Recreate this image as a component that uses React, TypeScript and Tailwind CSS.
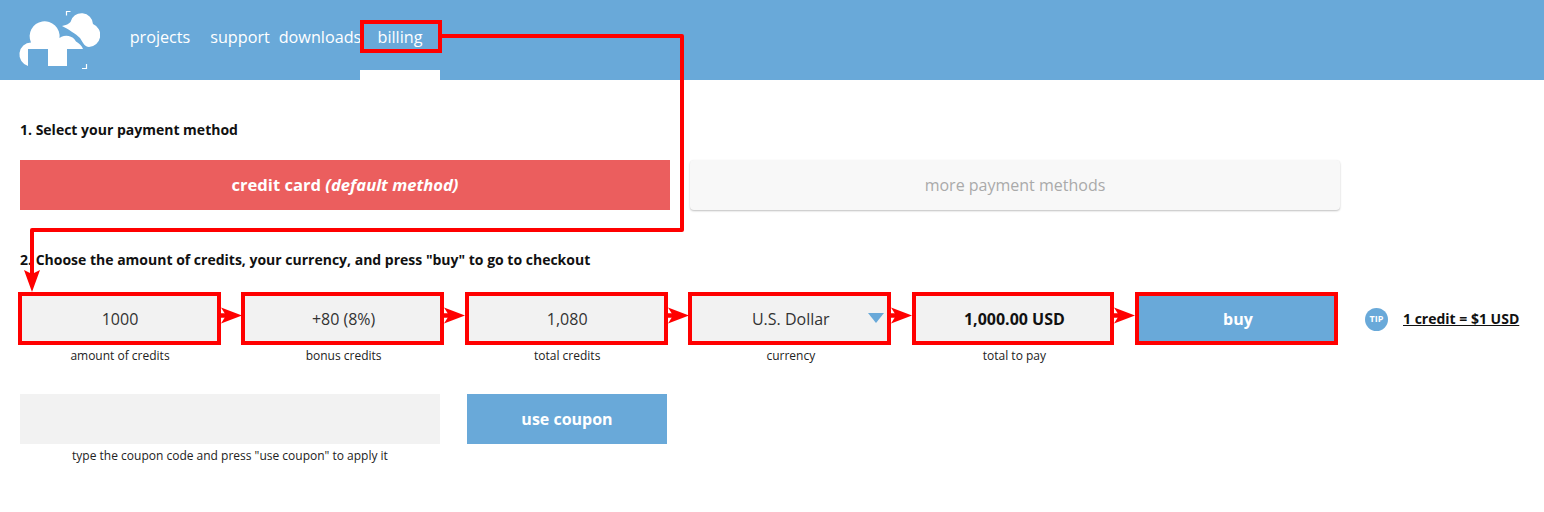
const navItems = ["projects", "support", "downloads", "billing"];

const fields = [
  { value: "1000", label: "amount of credits" },
  { value: "+80 (8%)", label: "bonus credits" },
  { value: "1,080", label: "total credits" },
  { value: "U.S. Dollar", label: "currency", select: true },
  { value: "1,000.00 USD", label: "total to pay", strong: true },
];

// red boxes and connectors that someone drew on top of the screenshot
const redBoxes = [
  [362, 22, 78, 29],
  [20, 294, 199, 49],
  [243, 294, 199, 49],
  [467, 294, 199, 49],
  [690, 294, 199, 49],
  [914, 294, 198, 49],
  [1137, 294, 199, 49],
];
const arrowStarts = [221, 444, 668, 891, 1114];

const Annotations = () => (
  <svg className="absolute left-0 top-0 pointer-events-none" width="1544" height="512">
    {redBoxes.map(([x, y, w, h]) => (
      <rect key={x} x={x} y={y} width={w} height={h} fill="none" stroke="#ff0000" strokeWidth="4" />
    ))}
    <path d="M440 36H682V230H32V275" fill="none" stroke="#ff0000" strokeWidth="4" strokeLinejoin="round" />
    <path d="M32 292L24 270L32 274L40 270Z" fill="#ff0000" />
    {arrowStarts.map((x) => (
      <g key={x}>
        <path d={`M${x} 315.5H${x + 8}`} stroke="#ff0000" strokeWidth="4.5" />
        <path d={`M${x + 21} 315.5L${x} 307.5L${x + 5} 315.5L${x} 323.5Z`} fill="#ff0000" />
      </g>
    ))}
  </svg>
);

const Logo = () => (
  <svg width="90" height="70" viewBox="0 0 90 70" className="absolute left-[10px] top-[5px]">
    <g fill="#fff">
      <path d="M18 61A12 12 0 0 1 21 37.5A15 15 0 1 1 49.5 33A11 11 0 0 1 66 36.5C69 38 72 41 73 44H57V61H38V44H18Z" />
      <path d="M52 21C56 20 59 19 60.5 17A11.4 11.4 0 0 1 83 19A12 12 0 0 1 79 42C75 42 73 38 70 33C66 29 58 24 52 21Z" />
    </g>
    <path d="M60.5 6.5H56.5V10.5M76.5 59V63.5H72" fill="none" stroke="#fff" strokeWidth="1.2" />
  </svg>
);

const App = () => {
  return (
    <div className="relative min-h-[512px] bg-white font-['Open_Sans',sans-serif] text-[#111]">
      <header className="relative h-20 bg-[#69a9d9] pl-[120px] flex">
        <Logo />
        {navItems.map((item) => (
          <a key={item} className="relative w-20 h-20 flex items-center justify-center pb-[6px] text-[16.2px] text-white">
            {item}
            {item === "billing" && <span className="absolute left-0 bottom-0 w-20 h-[10px] bg-white" />}
          </a>
        ))}
      </header>

      <main className="px-5 pt-[40px]">
        <h2 className="text-sm font-bold leading-5">1. Select your payment method</h2>
        <div className="mt-5 flex gap-5">
          <div className="w-[650px] h-[50px] bg-[#eb5e5e] text-white text-[16.6px] font-bold flex items-center justify-center">
            <span>credit card <em>(default method)</em></span>
          </div>
          <div className="w-[650px] h-[50px] bg-[#f8f8f8] text-[#aaa] rounded-sm shadow-[0_1px_2px_rgba(0,0,0,0.25)] flex items-center justify-center">
            more payment methods
          </div>
        </div>

        <h2 className="mt-10 text-sm font-bold leading-5">
          2. Choose the amount of credits, your currency, and press "buy" to go to checkout
        </h2>

        <div className="mt-[24px] flex items-start">
          <div className="w-[1318px] grid grid-cols-6 gap-x-[23.6px]">
            {fields.map((f) => (
              <div key={f.label}>
                <div
                  className={`relative h-[50px] bg-[#f2f2f2] flex items-center justify-center ${f.strong ? "font-bold text-[#111]" : "text-[#333]"}`}
                >
                  {f.value}
                  {f.select && (
                    <span className="absolute right-[7px] top-[19px] w-0 h-0 border-x-[8px] border-t-[10px] border-x-transparent border-t-[#69a9d9]" />
                  )}
                </div>
                <p className="mt-[4px] text-center text-xs leading-4 text-[#222]">{f.label}</p>
              </div>
            ))}
            <div className="h-[50px] bg-[#69a9d9] text-white font-bold flex items-center justify-center">buy</div>
          </div>
          <div className="ml-[27px] h-[50px] flex items-center">
            <span className="w-[23px] h-[23px] rounded-full bg-[#69a9d9] text-white text-[9px] font-bold flex items-center justify-center">
              TIP
            </span>
            <a className="ml-[15px] text-sm font-bold underline">1 credit = $1 USD</a>
          </div>
        </div>

        <div className="mt-[30px] flex items-start">
          <div className="w-[420px]">
            <div className="h-[50px] bg-[#f2f2f2]" />
            <p className="mt-[4px] text-center text-xs leading-4 text-[#222]">
              type the coupon code and press "use coupon" to apply it
            </p>
          </div>
          <div className="ml-[27px] w-[200px] h-[50px] bg-[#69a9d9] text-white font-bold flex items-center justify-center">
            use coupon
          </div>
        </div>
      </main>

      <Annotations />
    </div>
  );
};

export default App;
